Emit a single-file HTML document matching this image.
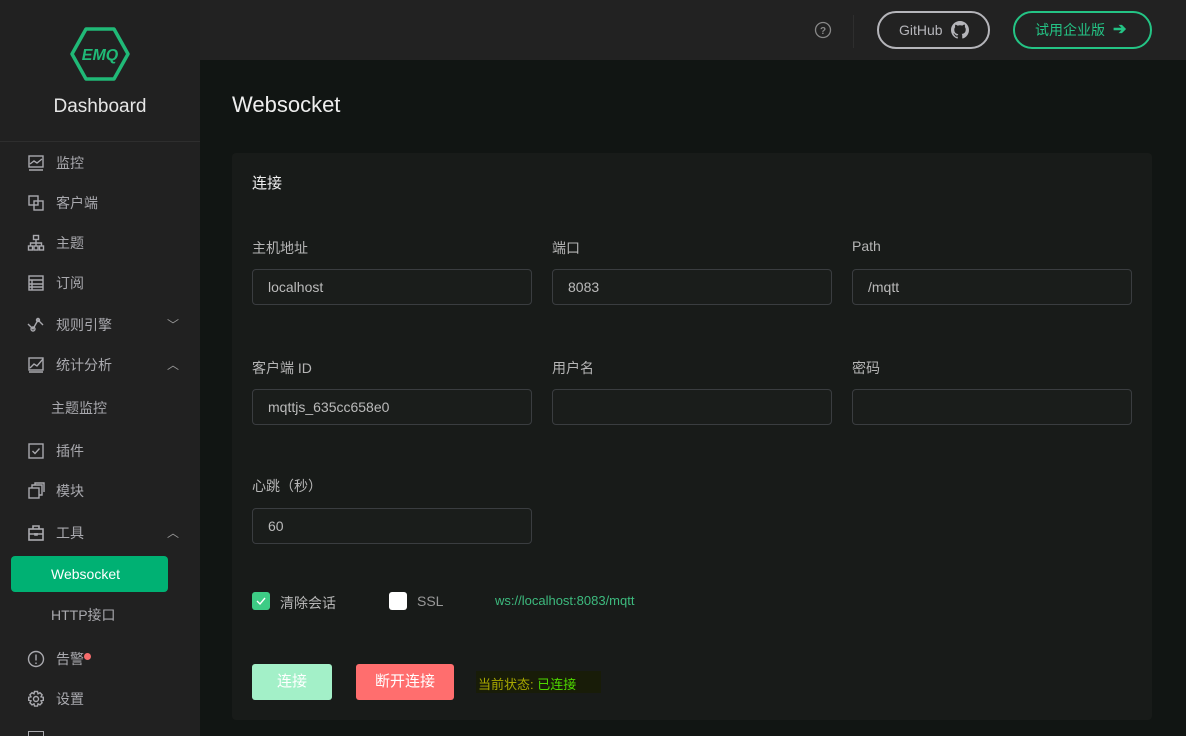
<!DOCTYPE html>
<html><head><meta charset="utf-8"><style>
*{margin:0;padding:0;box-sizing:border-box}
html{width:1186px;height:736px;overflow:hidden}
body{width:1186px;height:736px;overflow:hidden;background:#111513;font-family:"Liberation Sans","Noto Sans CJK SC",sans-serif;position:relative}
.side{position:absolute;left:0;top:0;width:200px;height:736px;background:#212121;overflow:hidden}
.logo{position:absolute;left:0;top:0;width:200px;height:142px;border-bottom:1px solid #2e2e2e}
.dash{position:absolute;top:96px;width:200px;text-align:center;color:#e6e6e6;font-size:19px}
.it{position:absolute;left:0;width:200px;height:20px;color:#a9a9ae;font-size:14px;line-height:20px}
.it .ic{position:absolute;left:27px;top:1px;width:18px;height:18px}
.it .t{position:absolute;left:56px}
.it .ch{position:absolute;left:167px;top:0;color:#999;font-size:12px}
.sub .t{left:51px}
.active{position:absolute;left:11px;top:556px;width:157px;height:36px;background:#00b173;border-radius:4px;color:#fff;font-size:14px;line-height:36px;padding-left:40px}
.hdr{position:absolute;left:200px;top:0;width:986px;height:60px;background:#222}
.card{position:absolute;left:232px;top:153px;width:920px;height:567px;background:#181b19;border-radius:4px}
.lbl{position:absolute;color:#b5b5b5;font-size:14px}
.inp{position:absolute;width:280px;height:36px;border:1px solid #3a3d40;border-radius:4px;background:#1a1d1b;color:#bbb;font-size:14px;line-height:34px;padding-left:15px}
</style></head><body>
<div class="side">
 <div class="logo">
  <svg style="position:absolute;left:70px;top:27px" width="60" height="54" viewBox="0 0 60 54"><polygon points="16,2 44,2 58,27 44,52 16,52 2,27" fill="none" stroke="#20b977" stroke-width="3.5" stroke-linejoin="round"/><text x="30" y="33" text-anchor="middle" font-family="Liberation Sans" font-weight="bold" font-style="italic" font-size="16" fill="#20b977">EMQ</text></svg>
  <div class="dash">Dashboard</div>
 </div>
 <div class="it" style="top:153px"><svg class="ic" viewBox="0 0 18 18" fill="none" stroke="#a9a9ae" stroke-width="1.4"><rect x="2" y="2" width="14" height="11"/><path d="M3 10l4-3 3 2 5-4M2 16h14"/></svg><span class="t">监控</span></div>
 <div class="it" style="top:193px"><svg class="ic" viewBox="0 0 18 18" fill="none" stroke="#a9a9ae" stroke-width="1.4"><rect x="2" y="2" width="9" height="9"/><rect x="7" y="7" width="9" height="9"/></svg><span class="t">客户端</span></div>
 <div class="it" style="top:233px"><svg class="ic" viewBox="0 0 18 18" fill="none" stroke="#a9a9ae" stroke-width="1.4"><rect x="6.5" y="1.5" width="5" height="4"/><rect x="1.5" y="12" width="4" height="4"/><rect x="7" y="12" width="4" height="4"/><rect x="12.5" y="12" width="4" height="4"/><path d="M9 5.5v6.5M3.5 12V9h11v3"/></svg><span class="t">主题</span></div>
 <div class="it" style="top:273px"><svg class="ic" viewBox="0 0 18 18" fill="none" stroke="#a9a9ae" stroke-width="1.4"><rect x="2" y="2" width="14" height="14"/><path d="M2 6h14M2 10h14M2 13h14M5 6v10"/></svg><span class="t">订阅</span></div>
 <div class="it" style="top:315px"><svg class="ic" viewBox="0 0 18 18" fill="none" stroke="#a9a9ae" stroke-width="1.4"><path d="M1 8l5 5 5-9 5 5"/><circle cx="6" cy="13" r="2"/><circle cx="11" cy="4" r="1.5"/></svg><span class="t">规则引擎</span><span class="ch">﹀</span></div>
 <div class="it" style="top:355px"><svg class="ic" viewBox="0 0 18 18" fill="none" stroke="#a9a9ae" stroke-width="1.4"><rect x="2" y="2" width="14" height="12"/><path d="M3 12l4-4 3 2 6-7M2 16h14"/></svg><span class="t">统计分析</span><span class="ch">︿</span></div>
 <div class="it sub" style="top:398px"><span class="t">主题监控</span></div>
 <div class="it" style="top:441px"><svg class="ic" viewBox="0 0 18 18" fill="none" stroke="#a9a9ae" stroke-width="1.4"><rect x="2" y="2" width="14" height="14"/><path d="M5.5 9l2.5 2.5 4.5-5"/></svg><span class="t">插件</span></div>
 <div class="it" style="top:481px"><svg class="ic" viewBox="0 0 18 18" fill="none" stroke="#a9a9ae" stroke-width="1.4"><rect x="2" y="6" width="10" height="10"/><path d="M5 6V3h10v10h-3M8 3V1h9v9"/></svg><span class="t">模块</span></div>
 <div class="it" style="top:523px"><svg class="ic" viewBox="0 0 18 18" fill="none" stroke="#a9a9ae" stroke-width="1.6"><rect x="2" y="5" width="14" height="11"/><path d="M6 5V2h6v3M2 10h14M8 9v2h2V9"/></svg><span class="t">工具</span><span class="ch">︿</span></div>
 <div class="active">Websocket</div>
 <div class="it sub" style="top:605px"><span class="t">HTTP接口</span></div>
 <div class="it" style="top:649px"><svg class="ic" viewBox="0 0 18 18" fill="none" stroke="#a9a9ae" stroke-width="1.4"><circle cx="9" cy="9" r="7.5"/><path d="M9 4.5v6M9 12.5v1.5"/></svg><span class="t">告警</span><span style="position:absolute;left:84px;top:4px;width:7px;height:7px;border-radius:50%;background:#f56c6c"></span></div>
 <div class="it" style="top:689px"><svg class="ic" viewBox="0 0 18 18" fill="none" stroke="#a9a9ae" stroke-width="1.4"><circle cx="9" cy="9" r="2.5"/><path d="M7.5 1.5h3l.5 2.3 2-1.1 2.1 2.1-1.1 2 2.3.5v3l-2.3.5 1.1 2-2.1 2.1-2-1.1-.5 2.3h-3l-.5-2.3-2 1.1-2.1-2.1 1.1-2-2.3-.5v-3l2.3-.5-1.1-2 2.1-2.1 2 1.1z"/></svg><span class="t">设置</span></div>
 <div style="position:absolute;left:28px;top:731px;width:16px;height:10px;border:1.4px solid #a9a9ae"></div>
</div>
<div class="hdr">
 <svg style="position:absolute;left:614px;top:21px" width="18" height="18" viewBox="0 0 18 18"><circle cx="9" cy="9" r="7.5" fill="none" stroke="#888" stroke-width="1.3"/><text x="9" y="13" text-anchor="middle" font-size="10" font-weight="bold" fill="#888" font-family="Liberation Sans">?</text></svg>
 <div style="position:absolute;left:653px;top:15px;width:1px;height:33px;background:#2e2e2e"></div>
 <div style="position:absolute;left:677px;top:11px;width:113px;height:38px;border:2px solid #b5b5ba;border-radius:19px;color:#b5b5ba;font-size:14px;line-height:34px;padding-left:20px">GitHub<svg style="position:absolute;left:72px;top:8px" width="18" height="18" viewBox="0 0 16 16"><path fill="#b5b5ba" d="M8 0C3.58 0 0 3.58 0 8c0 3.54 2.29 6.53 5.47 7.59.4.07.55-.17.55-.38v-1.33c-2.23.48-2.7-1.07-2.7-1.07-.36-.92-.89-1.17-.89-1.17-.73-.5.06-.49.06-.49.8.06 1.230.82 1.23.82.72 1.23 1.87.87 2.33.67.07-.52.28-.87.51-1.07-1.78-.2-3.64-.89-3.64-3.95 0-.87.31-1.59.82-2.15-.08-.2-.36-1.02.08-2.12 0 0 .67-.21 2.2.82A7.6 7.6 0 018 3.8c.68 0 1.36.09 2 .27 1.53-1.04 2.2-.82 2.2-.82.44 1.1.16 1.92.08 2.12.51.56.82 1.27.82 2.15 0 3.07-1.87 3.75-3.65 3.95.29.25.54.73.54 1.48v2.2c0 .21.15.46.55.38A8 8 0 0016 8c0-4.42-3.58-8-8-8z"/></svg></div>
 <div style="position:absolute;left:813px;top:11px;width:139px;height:38px;border:2px solid #24c485;border-radius:19px;color:#24c485;font-size:14px;line-height:34px;padding-left:20px">试用企业版<span style="position:absolute;left:98px;top:0;font-weight:bold;font-size:16px">➔</span></div>
</div>
<div style="position:absolute;left:232px;top:92px;color:#eee;font-size:22px">Websocket</div>
<div class="card">
 <div style="position:absolute;left:20px;top:19px;color:#eee;font-size:15px">连接</div>
 <div class="lbl" style="left:20px;top:85px">主机地址</div><div class="inp" style="left:20px;top:116px">localhost</div>
 <div class="lbl" style="left:320px;top:85px">端口</div><div class="inp" style="left:320px;top:116px">8083</div>
 <div class="lbl" style="left:620px;top:85px">Path</div><div class="inp" style="left:620px;top:116px">/mqtt</div>
 <div class="lbl" style="left:20px;top:205px">客户端 ID</div><div class="inp" style="left:20px;top:236px">mqttjs_635cc658e0</div>
 <div class="lbl" style="left:320px;top:205px">用户名</div><div class="inp" style="left:320px;top:236px"></div>
 <div class="lbl" style="left:620px;top:205px">密码</div><div class="inp" style="left:620px;top:236px"></div>
 <div class="lbl" style="left:20px;top:323px">心跳（秒）</div><div class="inp" style="left:20px;top:355px">60</div>
 <div style="position:absolute;left:20px;top:439px;width:18px;height:18px;background:#3dcc85;border-radius:3px"><svg width="18" height="18"><path d="M5 9l3 3 5-6" fill="none" stroke="#fff" stroke-width="1.4"/></svg></div>
 <div class="lbl" style="left:48px;top:440px">清除会话</div>
 <div style="position:absolute;left:157px;top:439px;width:18px;height:18px;background:#fff;border-radius:3px"></div>
 <div class="lbl" style="left:185px;top:440px;color:#999">SSL</div>
 <div class="lbl" style="left:263px;top:440px;color:#3dba7e;font-size:13px">ws://localhost:8083/mqtt</div>
 <div style="position:absolute;left:20px;top:511px;width:80px;height:36px;background:#a3f0c8;border-radius:3px;color:#fff;font-size:15px;line-height:36px;text-align:center">连接</div>
 <div style="position:absolute;left:124px;top:511px;width:98px;height:36px;background:#ff6e6e;border-radius:3px;color:#fff;font-size:15px;line-height:36px;text-align:center">断开连接</div>
 <div style="position:absolute;left:244px;top:518px;height:22px;width:125px;background:#181c08"></div>
 <div class="lbl" style="left:246px;top:521px;color:#a8a800;font-size:13px">当前状态: <span style="color:#4ed800">已连接</span></div>
</div>
</body></html>
